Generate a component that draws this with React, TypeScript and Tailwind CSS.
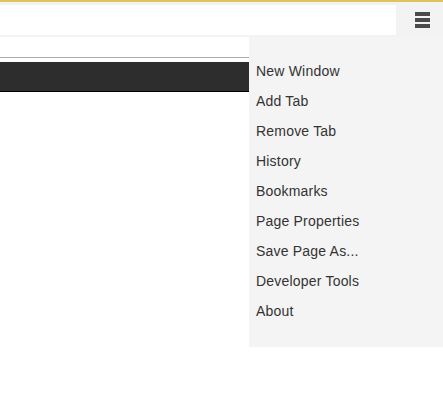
import React from "react";

const items = [
  "New Window",
  "Add Tab",
  "Remove Tab",
  "History",
  "Bookmarks",
  "Page Properties",
  "Save Page As...",
  "Developer Tools",
  "About",
];

export default function App() {
  return (
    <div className="w-[443px] h-[405px] bg-white font-['Liberation_Sans',Arial,sans-serif] overflow-hidden">
      {/* barre d'outils */}
      <div className="h-[37px] bg-[#f3f3f3] border-t-2 border-[#e2c357] flex">
        <div className="w-[396px] h-[30px] mt-[3px] bg-white" />
        <button className="flex-1 flex items-start justify-start pl-[19px] pt-[10px]" aria-label="Menu">
          <div className="w-[15px] flex flex-col gap-[2px]">
            <span className="block h-[4px] bg-[#4b4b4b]" />
            <span className="block h-[4px] bg-[#4b4b4b]" />
            <span className="block h-[4px] bg-[#4b4b4b]" />
          </div>
        </button>
      </div>

      <div className="flex">
        {/* contenu */}
        <div className="w-[249px] flex flex-col">
          <div className="h-[21px] border-b border-[#ababab]" />
          <div className="h-[4px]" />
          <div className="h-[30px] bg-[#2d2d2d] border-b border-black" />
        </div>

        {/* menu */}
        <div className="flex-1 h-[310px] bg-[#f4f4f4] pt-[19px] pb-[21px]">
          {items.map((item) => (
            <div key={item} className="h-[30px] flex items-center pl-[7px] text-[14px] text-[#333333] tracking-[0.2px]">
              {item}
            </div>
          ))}
        </div>
      </div>
    </div>
  );
}
